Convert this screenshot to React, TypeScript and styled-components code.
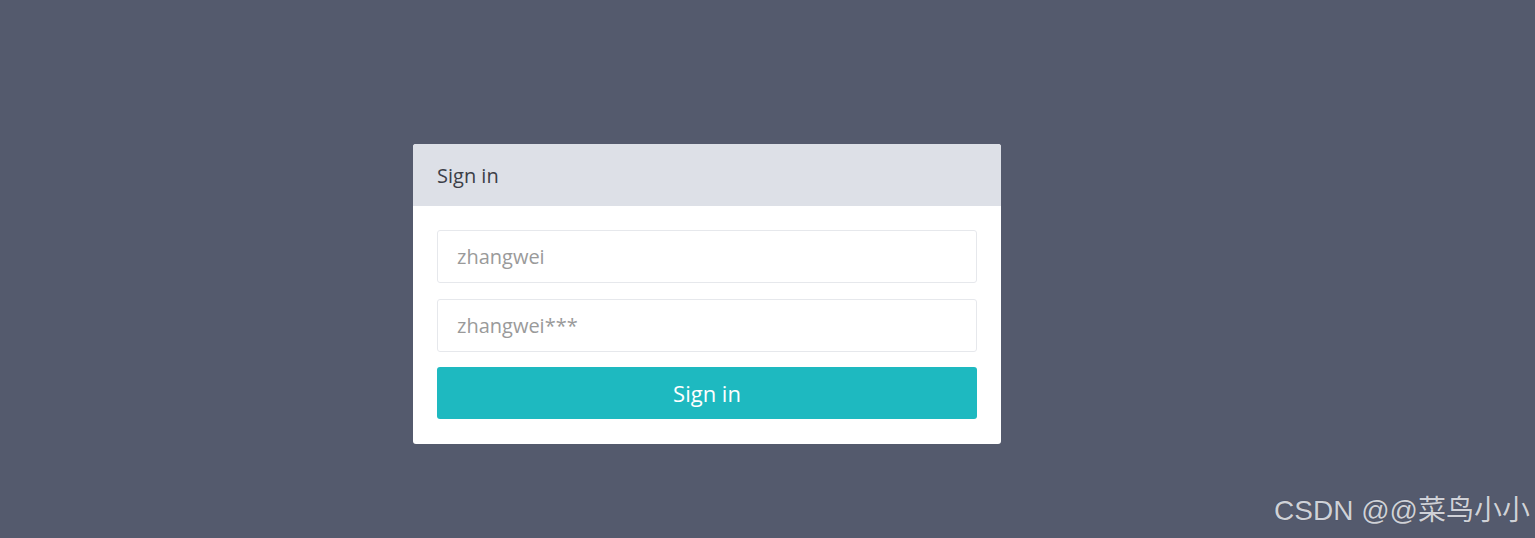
import React from "react";
import styled, { createGlobalStyle } from "styled-components";

const Global = createGlobalStyle`
  html, body { margin: 0; padding: 0; }
  body { background: #545a6d; font-family: "Open Sans", "Liberation Sans", sans-serif; }
  * { box-sizing: border-box; }
`;

const Page = styled.div`
  position: relative;
  width: 1535px;
  height: 538px;
  padding: 144px 0 0 413px;
  overflow: hidden;
`;

const Card = styled.div`
  width: 588px;
  background: #ffffff;
  border-radius: 3px;
  overflow: hidden;
`;

const Header = styled.div`
  height: 62px;
  background: #dde0e7;
  display: flex;
  align-items: center;
  padding: 0 24px;
  font-size: 20px;
  color: #3c3f47;
`;

const Body = styled.form`
  display: flex;
  flex-direction: column;
  padding: 24px 24px 25px;
  gap: 16px;
`;

const Input = styled.input`
  height: 53px;
  width: 100%;
  border: 1px solid #e6e8ec;
  border-radius: 3px;
  padding: 0 19px;
  font-family: "Open Sans", "Liberation Sans", sans-serif;
  font-size: 20px;
  color: #555;
  outline: none;
  &::placeholder { color: #9a9a9a; }
`;

const Button = styled.button`
  height: 52px;
  margin-top: -1px;
  width: 100%;
  border: none;
  border-radius: 3px;
  background: #1eb9c0;
  color: #fff;
  font-family: "Open Sans", "Liberation Sans", sans-serif;
  font-size: 22px;
  padding: 0;
`;

const Watermark = styled.div`
  position: absolute;
  right: 5px;
  bottom: 10px;
  font-family: "Liberation Sans", "Noto Sans CJK SC", sans-serif;
  font-size: 28px;
  color: #cfd1d7;
  text-shadow: 0 0 1px rgba(0,0,0,0.3);
`;

export default function App() {
  return (
    <>
      <Global />
      <Page>
        <Card>
          <Header>Sign in</Header>
          <Body onSubmit={(e) => e.preventDefault()}>
            <Input placeholder="zhangwei" />
            <Input placeholder="zhangwei***" />
            <Button type="submit">Sign in</Button>
          </Body>
        </Card>
        <Watermark>CSDN @@菜鸟小小</Watermark>
      </Page>
    </>
  );
}
